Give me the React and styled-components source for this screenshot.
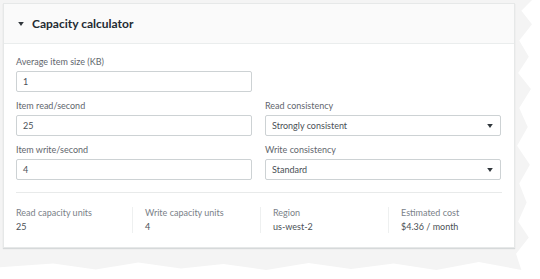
import React from 'react'
import styled, { createGlobalStyle } from 'styled-components'

const GlobalStyle = createGlobalStyle`
  html, body {
    margin: 0;
    padding: 0;
    background: #ffffff;
  }
  body {
    font-family: Lato, "Liberation Sans", Arial, sans-serif;
    color: #16191f;
  }
`

const Paper = styled.div`
  width: 532px;
  height: 270px;
  padding: 3px 0 0 3px;
  box-sizing: border-box;
  background: #f4f4f4;
  clip-path: polygon(
    0 0, 100% 0, 98% 4%, 100% 9%, 97.6% 15%, 99.4% 21%, 97.4% 27%, 99.8% 33%,
    97.6% 40%, 99.2% 47%, 97.2% 54%, 99.6% 61%, 97.6% 68%, 99% 75%, 97.4% 82%,
    99.4% 88%, 97% 94%, 98% 100%, 90% 97%, 82% 100%, 74% 97.6%, 66% 99.6%,
    58% 97.4%, 50% 100%, 42% 97.8%, 34% 99.4%, 26% 97.2%, 18% 99.8%, 10% 97.6%,
    0 99%
  );
`

const Card = styled.section`
  width: 512px;
  height: 245px;
  box-sizing: border-box;
  background: #ffffff;
  border: 1px solid #e6e8e8;
  box-shadow: 0 1px 1px rgba(0, 28, 36, 0.12);
`

const Header = styled.header`
  height: 40px;
  box-sizing: border-box;
  display: flex;
  align-items: center;
  gap: 7px;
  padding-left: 13px;
  background: #fafafa;
  border-bottom: 1px solid #eaeded;
`

const Title = styled.h2`
  margin: 0;
  font-size: 12px;
  font-weight: 700;
  color: #232a31;
`

const Body = styled.div`
  padding: 11px 12px 0 12px;
`

const FieldGrid = styled.div`
  display: grid;
  grid-template-columns: 236px 236px;
  column-gap: 13px;
  row-gap: 7px;
`

const Field = styled.div`
  display: flex;
  flex-direction: column;
  gap: 2px;
  grid-column: ${p => p.$col || 'auto'};
`

const Label = styled.label`
  font-size: 9px;
  line-height: 14px;
  color: #5f666d;
`

const Input = styled.div`
  height: 21px;
  box-sizing: border-box;
  border: 1px solid #cdd2d4;
  border-radius: 2px;
  padding: 0 6px;
  display: flex;
  align-items: center;
  justify-content: space-between;
  font-size: 9px;
  color: #4a5056;
`

const Divider = styled.hr`
  margin: 12px 0 0 0;
  border: none;
  border-top: 1px solid #e8eaea;
`

const Stats = styled.div`
  display: grid;
  grid-template-columns: 116px 128px 128px 114px;
  padding-top: 14px;
`

const Stat = styled.div`
  display: flex;
  flex-direction: column;
  gap: 2px;
  padding-left: ${p => (p.$first ? '0' : '12px')};
  border-left: ${p => (p.$first ? 'none' : '1px solid #eef0f0')};
`

const StatLabel = styled.span`
  font-size: 9px;
  line-height: 12px;
  color: #7a8188;
`

const StatValue = styled.span`
  font-size: 9px;
  line-height: 12px;
  color: #4a5056;
`

const Caret = ({ size = 8 }) => (
  <svg width={size} height={size} viewBox="0 0 10 10">
    <path d="M1.5 2.5 L8.5 2.5 L5 7.5 Z" fill="#30363b" />
  </svg>
)

const fields = [
  { label: 'Average item size (KB)', value: '1', col: '1' },
  { label: 'Item read/second', value: '25' },
  { label: 'Read consistency', value: 'Strongly consistent', select: true },
  { label: 'Item write/second', value: '4' },
  { label: 'Write consistency', value: 'Standard', select: true },
]

const stats = [
  ['Read capacity units', '25'],
  ['Write capacity units', '4'],
  ['Region', 'us-west-2'],
  ['Estimated cost', '$4.36 / month'],
]

export default function App() {
  return (
    <>
      <GlobalStyle />
      <Paper>
        <Card>
          <Header>
            <Caret size={8} />
            <Title>Capacity calculator</Title>
          </Header>
          <Body>
            <FieldGrid>
              {fields.map(f => (
                <React.Fragment key={f.label}>
                  <Field $col={f.col}>
                    <Label>{f.label}</Label>
                    <Input>
                      <span>{f.value}</span>
                      {f.select && <Caret size={8} />}
                    </Input>
                  </Field>
                  {f.col && <div />}
                </React.Fragment>
              ))}
            </FieldGrid>
            <Divider />
            <Stats>
              {stats.map(([label, value], i) => (
                <Stat key={label} $first={i === 0}>
                  <StatLabel>{label}</StatLabel>
                  <StatValue>{value}</StatValue>
                </Stat>
              ))}
            </Stats>
          </Body>
        </Card>
      </Paper>
    </>
  )
}
